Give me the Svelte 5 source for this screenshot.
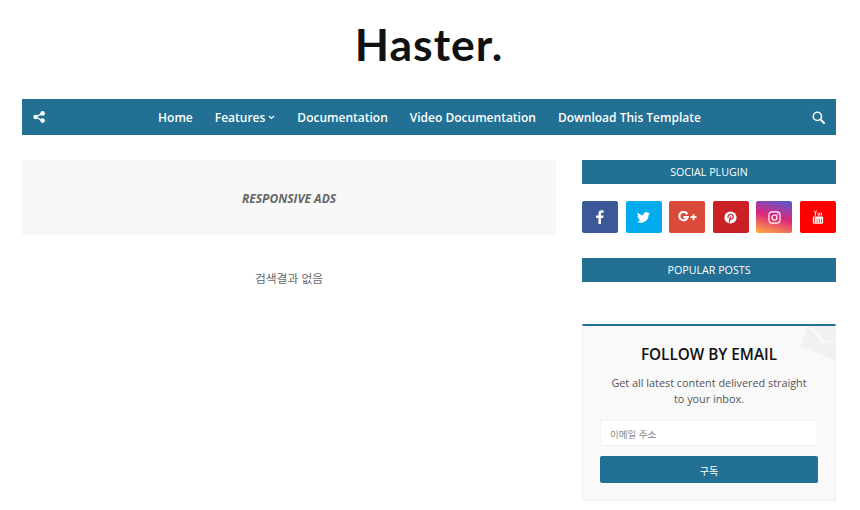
<script>
  const navItems = [
    { label: 'Home' },
    { label: 'Features', caret: true },
    { label: 'Documentation' },
    { label: 'Video Documentation' },
    { label: 'Download This Template' }
  ];
</script>

<div class="page">
  <header class="logo"><h1>Haster.</h1></header>

  <nav class="nav">
    <svg class="ico" viewBox="0 0 12 12" width="12" height="12" aria-hidden="true">
      <circle cx="2.6" cy="6" r="2.3" fill="#fff"/><circle cx="9.6" cy="2.4" r="2.3" fill="#fff"/><circle cx="9.6" cy="9.6" r="2.3" fill="#fff"/>
      <path d="M2.6 6 9.6 2.4M2.6 6l7 3.6" stroke="#fff" stroke-width="1.3"/>
    </svg>
    <ul class="menu">
      {#each navItems as item}
        <li>
          {item.label}{#if item.caret}<svg class="caret" viewBox="0 0 8 6" width="7" height="5" aria-hidden="true"><path d="M1 1.2 4 4.2 7 1.2" fill="none" stroke="#fff" stroke-width="1.3"/></svg>{/if}
        </li>
      {/each}
    </ul>
    <svg class="ico" viewBox="0 0 13 13" width="13" height="13" aria-hidden="true">
      <circle cx="5.4" cy="5.4" r="4.1" fill="none" stroke="#fff" stroke-width="1.6"/>
      <path d="M8.4 8.4 12 12" stroke="#fff" stroke-width="2" stroke-linecap="round"/>
    </svg>
  </nav>

  <div class="content">
    <main class="main">
      <div class="ads">RESPONSIVE ADS</div>
      <p class="empty">검색결과 없음</p>
    </main>

    <aside class="side">
      <h3 class="title">SOCIAL PLUGIN</h3>
      <div class="social">
        <span class="s fb">
          <svg viewBox="2 0 9 16" width="8" height="14"><path fill="#fff" d="M7.6 16V9h2.600l.4-2.800h-3V4.400c0-.8.3-1.300 1.400-1.300h1.700V.6C10.400.5 9.500.4 8.500.4 6.200.4 4.700 1.800 4.700 4.100v2.100H2V9h2.700v7z"/></svg>
        </span>
        <span class="s tw">
          <svg viewBox="0 0 24 20" width="13" height="11"><path fill="#fff" d="M24 2.400c-.9.400-1.800.7-2.800.8 1-.6 1.800-1.600 2.200-2.700-1 .6-2 1-3.100 1.200A4.900 4.900 0 0 0 11.900 6.200C7.800 6 4.200 4 1.700.9a4.900 4.900 0 0 0 1.500 6.600c-.8 0-1.600-.2-2.200-.6v.1c0 2.400 1.700 4.400 3.900 4.800-.7.200-1.500.2-2.200.1.600 2 2.400 3.400 4.600 3.400A9.900 9.900 0 0 1 0 17.300 13.900 13.900 0 0 0 7.500 19.500c9.100 0 14-7.500 14-14v-.6c1-.7 1.800-1.600 2.500-2.500z"/></svg>
        </span>
        <span class="s gp">
          <svg viewBox="0 0 20 12" width="20" height="12">
            <path d="M10.300 3.200A4.200 4.200 0 1 0 10.600 6.200H6.400" fill="none" stroke="#fff" stroke-width="2.200"/>
            <path d="M13.500 6.200h6M16.500 3.200v6" stroke="#fff" stroke-width="1.800"/>
          </svg>
        </span>
        <span class="s pt">
          <svg viewBox="0 0 16 16" width="13" height="13"><circle cx="8" cy="8" r="7.500" fill="#fff"/><path d="M6.500 14 8 6.500M5.200 8.500c-1-2.700 1-4.500 3-4.500 2.300 0 3.600 1.500 3.200 3.500-.4 2.300-2.700 3.300-3.900 1.800" fill="none" stroke="#c9202a" stroke-width="1.500"/></svg>
        </span>
        <span class="s ig">
          <svg viewBox="0 0 14 14" width="13" height="13"><rect x="1" y="1" width="12" height="12" rx="3.200" fill="none" stroke="#fff" stroke-width="1.300"/><circle cx="7" cy="7" r="2.700" fill="none" stroke="#fff" stroke-width="1.300"/><circle cx="10.400" cy="3.600" r=".8" fill="#fff"/></svg>
        </span>
        <span class="s yt">
          <svg viewBox="0 0 14 16" width="12" height="14">
            <path d="M2.500.5 4 3.200 5.500.5M4 3.200V6.500M7 3v2.600q0 .7.800.7h.5q.7 0 .7-.7V3M11 3v3.300" fill="none" stroke="#fff" stroke-width="1.100"/>
            <rect x="1" y="7.500" width="12" height="8.500" rx="1.500" fill="#fff"/>
            <path d="M3 9v6M2 9h2M6 10v5M8.500 10v5M11 10v5" stroke="#f00" stroke-width=".8"/>
          </svg>
        </span>
      </div>

      <h3 class="title popular">POPULAR POSTS</h3>

      <section class="follow">
        <svg class="mail" viewBox="0 0 34 36" width="34" height="36" aria-hidden="true">
          <path d="M7 0H34V34L0 21Z" fill="#f1f1f1"/>
          <path d="M8 -1 23 17 34 15" fill="none" stroke="#f9f9f9" stroke-width="2.500"/>
        </svg>
        <h2>FOLLOW BY EMAIL</h2>
        <p>Get all latest content delivered straight to your inbox.</p>
        <div class="input">이메일 주소</div>
        <button class="btn">구독</button>
      </section>
    </aside>
  </div>
</div>

<style>
  :global(body) {
    margin: 0;
    background: #fff;
  }
  .page {
    width: 814px;
    height: 510px;
    padding: 0 24px 0 22px;
    overflow: hidden;
    font-family: "Open Sans", "Noto Sans CJK KR", sans-serif;
  }
  .logo {
    height: 99px;
    display: flex;
    justify-content: center;
  }
  .logo h1 {
    margin: 16px 0 0;
    font: 700 44.500px/56px Lato, sans-serif;
    letter-spacing: 1px;
    color: #111;
  }
  .nav {
    height: 36px;
    background: #227093;
    display: flex;
    align-items: center;
    justify-content: space-between;
    padding: 0 11px;
    box-sizing: border-box;
    color: #fff;
  }
  .menu {
    list-style: none;
    margin: 0 0 0 2px;
    padding: 0;
    display: flex;
    gap: 22px;
    font-size: 12px;
    font-weight: 600;
  }
  .caret {
    vertical-align: 2px;
    margin-left: 3px;
  }
  .content {
    display: flex;
    justify-content: space-between;
    margin-top: 25px;
  }
  .main {
    width: 534px;
  }
  .ads {
    height: 75px;
    box-sizing: border-box;
    padding-top: 1px;
    background: #f8f8f8;
    display: flex;
    align-items: center;
    justify-content: center;
    font-size: 12px;
    font-weight: 700;
    font-style: italic;
    color: #666;
  }
  .empty {
    margin: 34px 0 0;
    text-align: center;
    font-size: 11.800px;
    line-height: 18px;
    color: #666;
  }
  .side {
    width: 254px;
  }
  .title {
    margin: 0;
    height: 24px;
    background: #227093;
    color: #fff;
    font-size: 10.700px;
    font-weight: 400;
    line-height: 24px;
    text-align: center;
  }
  .social {
    display: flex;
    justify-content: space-between;
    margin-top: 17px;
  }
  .s {
    width: 36px;
    height: 32px;
    border-radius: 2px;
    display: flex;
    align-items: center;
    justify-content: center;
  }
  .fb { background: #3b5999; }
  .tw { background: #00acee; }
  .gp { background: #db4a39; }
  .pt { background: #ca2127; }
  .ig { background: linear-gradient(15deg, #ffb13d, #dd277b 50%, #4d5ed4); }
  .yt { background: #f00; }
  .popular {
    margin-top: 25px;
  }
  .follow {
    position: relative;
    overflow: hidden;
    box-sizing: border-box;
    height: 177px;
    margin-top: 42px;
    padding: 0 17px;
    background: #f9f9f9;
    border: 1px solid #f0f0f0;
    border-top: 2px solid #227093;
    text-align: center;
  }
  .mail {
    position: absolute;
    top: 0;
    right: 0;
  }
  .follow h2 {
    position: relative;
    margin: 18px 0 0;
    font-size: 15.300px;
    line-height: 20px;
    font-weight: 600;
    color: #111;
  }
  .follow p {
    margin: 11px 10px 0;
    font-size: 10.840px;
    line-height: 16px;
    color: #555;
  }
  .input {
    margin-top: 13px;
    height: 26px;
    box-sizing: border-box;
    background: #fff;
    border: 1px solid #f3f3f3;
    font-size: 9.500px;
    line-height: 28px;
    text-align: left;
    padding-left: 9px;
    color: #888;
  }
  .btn {
    display: block;
    width: 100%;
    height: 27px;
    margin-top: 10px;
    padding: 2px 0 0;
    border: 0;
    border-radius: 2px;
    background: #227093;
    color: #fff;
    font-family: inherit;
    font-size: 10px;
  }
</style>
